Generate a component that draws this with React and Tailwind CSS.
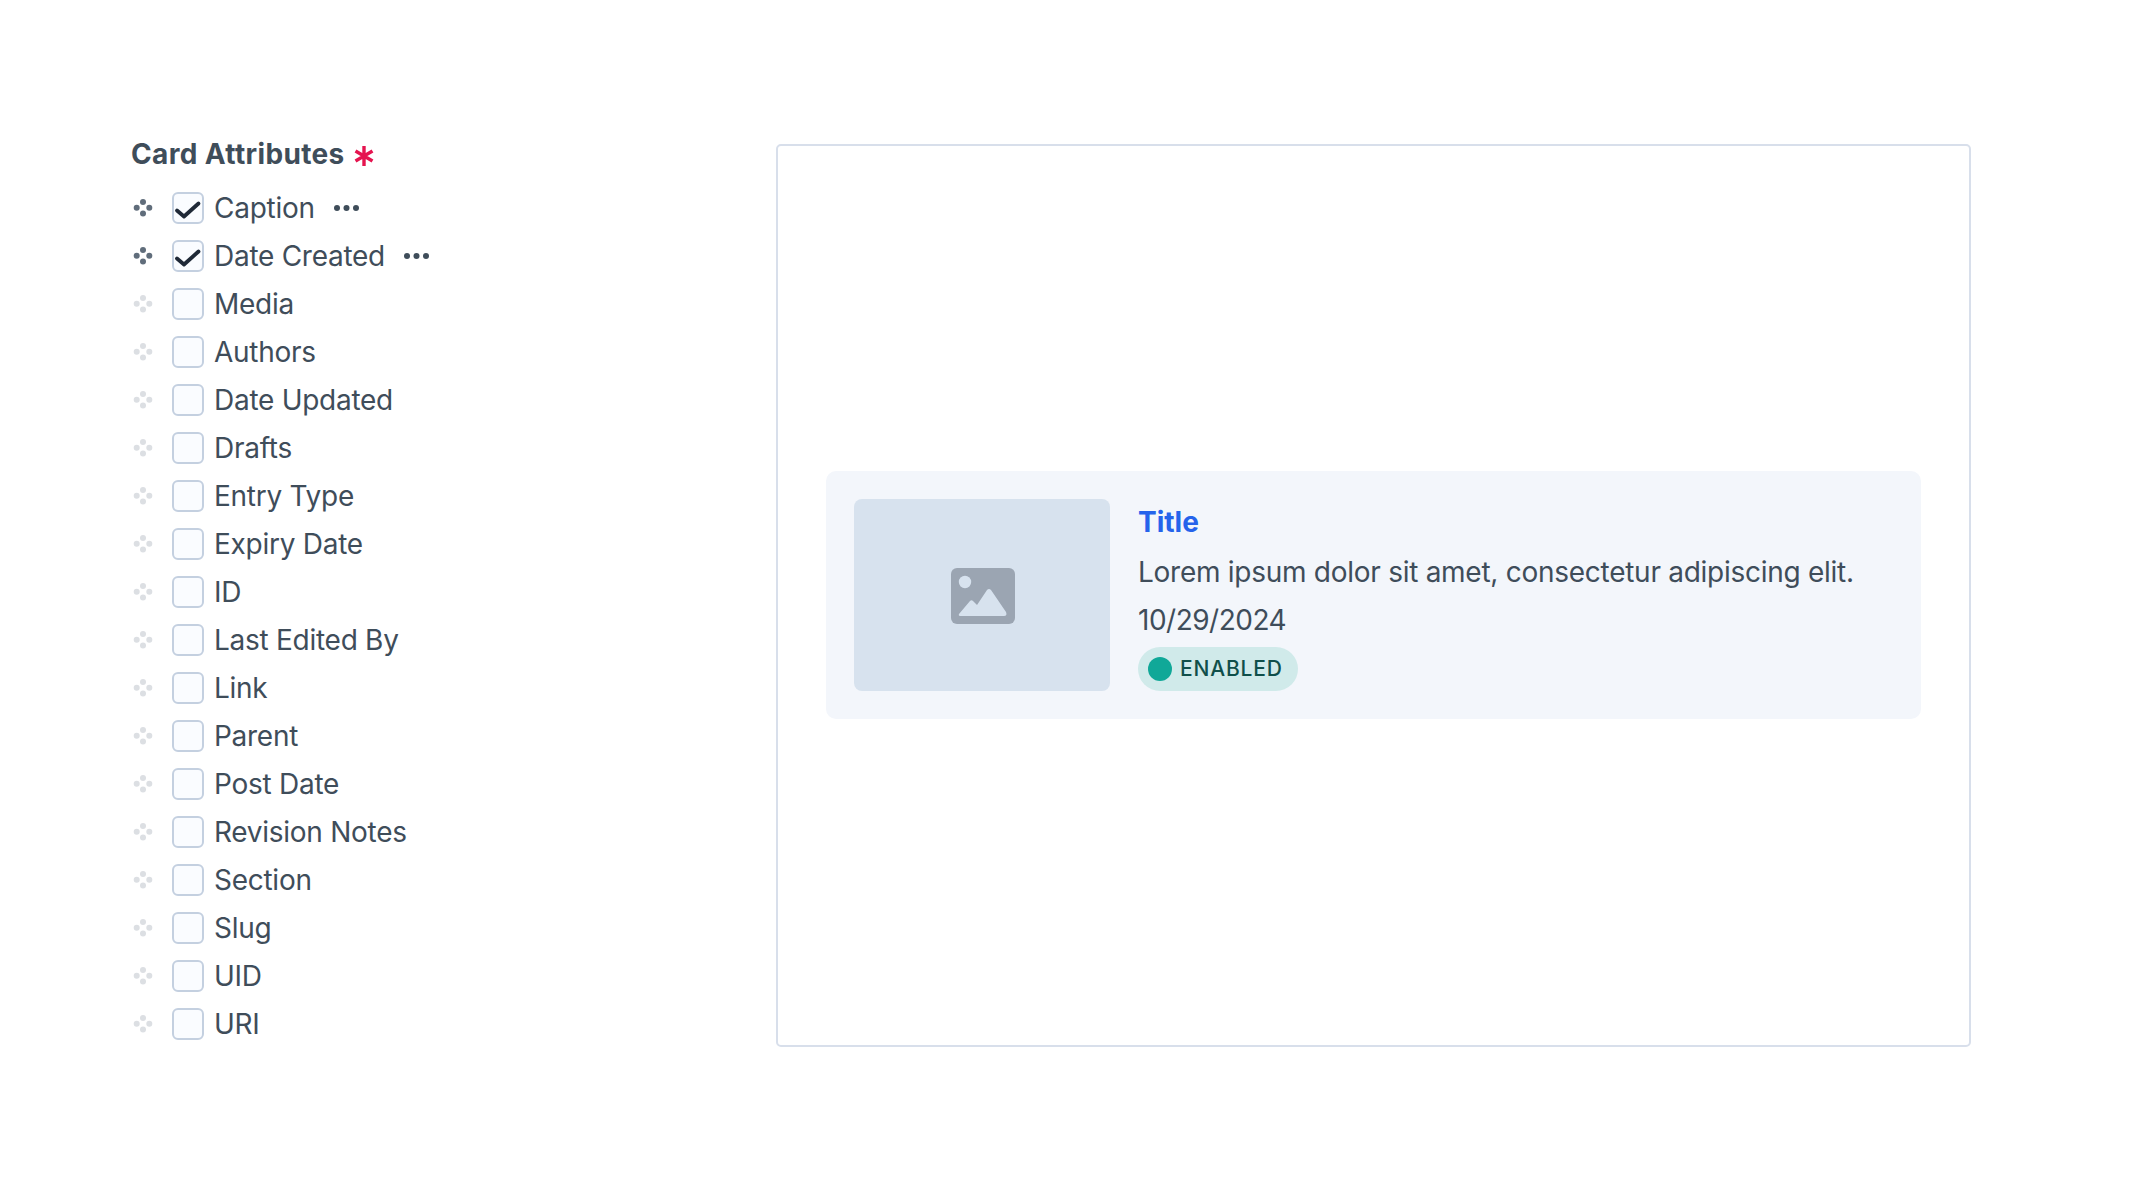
const attributes = [
  { label: "Caption", checked: true },
  { label: "Date Created", checked: true },
  { label: "Media" },
  { label: "Authors" },
  { label: "Date Updated" },
  { label: "Drafts" },
  { label: "Entry Type" },
  { label: "Expiry Date" },
  { label: "ID" },
  { label: "Last Edited By" },
  { label: "Link" },
  { label: "Parent" },
  { label: "Post Date" },
  { label: "Revision Notes" },
  { label: "Section" },
  { label: "Slug" },
  { label: "UID" },
  { label: "URI" },
]

function DragHandle({ active }) {
  return (
    <svg width="20" height="20" viewBox="0 0 20 20" className={`ml-[2px] ${active ? "text-[#606d7b]" : "text-[#dcdfe3]"}`}>
      <circle cx="10" cy="4" r="3" fill="currentColor" />
      <circle cx="3.7" cy="9.7" r="3" fill="currentColor" />
      <circle cx="16.3" cy="9.7" r="3" fill="currentColor" />
      <circle cx="10" cy="15.5" r="3" fill="currentColor" />
    </svg>
  )
}

function Row({ label, checked }) {
  return (
    <div className="flex items-center h-12">
      <div className="w-[41px] flex">
        <DragHandle active={checked} />
      </div>
      <div className="w-8 h-8 -mt-[1px] rounded-[6px] border-[2.5px] border-[#c4d0e0] bg-[#fafcff] flex items-center justify-center">
        {checked && (
          <svg width="28" height="28" viewBox="0 0 28 28" fill="none" className="shrink-0">
            <path d="M3 16.5 L10 22.5 L24.5 9.5" stroke="#1f2937" strokeWidth="3.8" strokeLinecap="round" strokeLinejoin="round" />
          </svg>
        )}
      </div>
      <span className="ml-[10px] text-[28px] leading-none tracking-[-0.27px] text-[#3f4d5a]">{label}</span>
      {checked && (
        <svg width="28" height="8" viewBox="0 0 28 8" className="ml-[18px] text-[#3f4d5a]">
          <circle cx="4" cy="4" r="3" fill="currentColor" />
          <circle cx="13.5" cy="4" r="3" fill="currentColor" />
          <circle cx="23" cy="4" r="3" fill="currentColor" />
        </svg>
      )}
    </div>
  )
}

export default function App() {
  return (
    <div className="min-h-[1200px] bg-white flex pt-[129px] pl-[131px] font-['Inter',sans-serif]">
      <div className="w-[645px]">
        <div className="flex items-center h-[50px] mb-[5px]">
          <span className="text-[28px] font-bold tracking-[0.36px] text-[#3f4d5a]">Card Attributes</span>
          <svg width="22" height="22" viewBox="0 0 22 22" className="ml-[8px] mt-[3px]">
            <path d="M11 1 V21 M2.5 6 L19.5 16 M19.5 6 L2.5 16" stroke="#e5144f" strokeWidth="3.4" />
          </svg>
        </div>
        {attributes.map((a) => (
          <Row key={a.label} label={a.label} checked={a.checked} />
        ))}
      </div>

      <div className="w-[1195px] h-[903px] mt-[15px] border-2 border-[#d8dfeb] rounded-[5px] flex items-center justify-center">
        <div className="w-[1095px] h-[248px] -mt-[1px] p-7 bg-[#f3f6fb] rounded-[10px] flex gap-7">
          <div className="w-[256px] h-[192px] bg-[#d7e2ee] rounded-[8px] flex items-center justify-center shrink-0">
            <svg width="64" height="56" viewBox="0 0 64 56" className="ml-[1px] mt-[1px]">
              <rect width="64" height="56" rx="6" fill="#9ba5b2" />
              <circle cx="14" cy="14" r="6.2" fill="#d7e2ee" />
              <path d="M8 46 L19 33 Q20.5 31.5 22 33 L26 37 L36 22 Q38 20 40 22 L55 44 Q56.5 48 53 48 L10 48 Q7 48 8 46 Z" fill="#d7e2ee" />
            </svg>
          </div>
          <div className="flex flex-col">
            <div className="h-[48px] -mt-[1px] flex items-center text-[28px] font-bold text-[#2563eb]">Title</div>
            <div className="h-[48px] mt-[2px] flex items-center text-[28px] tracking-[-0.27px] text-[#3f4d5a]">Lorem ipsum dolor sit amet, consectetur adipiscing elit.</div>
            <div className="h-[48px] flex items-center text-[28px] tracking-[-0.5px] text-[#3f4d5a]">10/29/2024</div>
            <div className="self-start mt-[3px] h-11 pl-2.5 pr-[15px] rounded-full bg-[#d0eaea] flex items-center gap-[8px]">
              <span className="w-6 h-6 rounded-full bg-[#10a898]" />
              <span className="text-[21px] font-medium tracking-[0.04em] text-[#0f4f4a]">ENABLED</span>
            </div>
          </div>
        </div>
      </div>
    </div>
  )
}
